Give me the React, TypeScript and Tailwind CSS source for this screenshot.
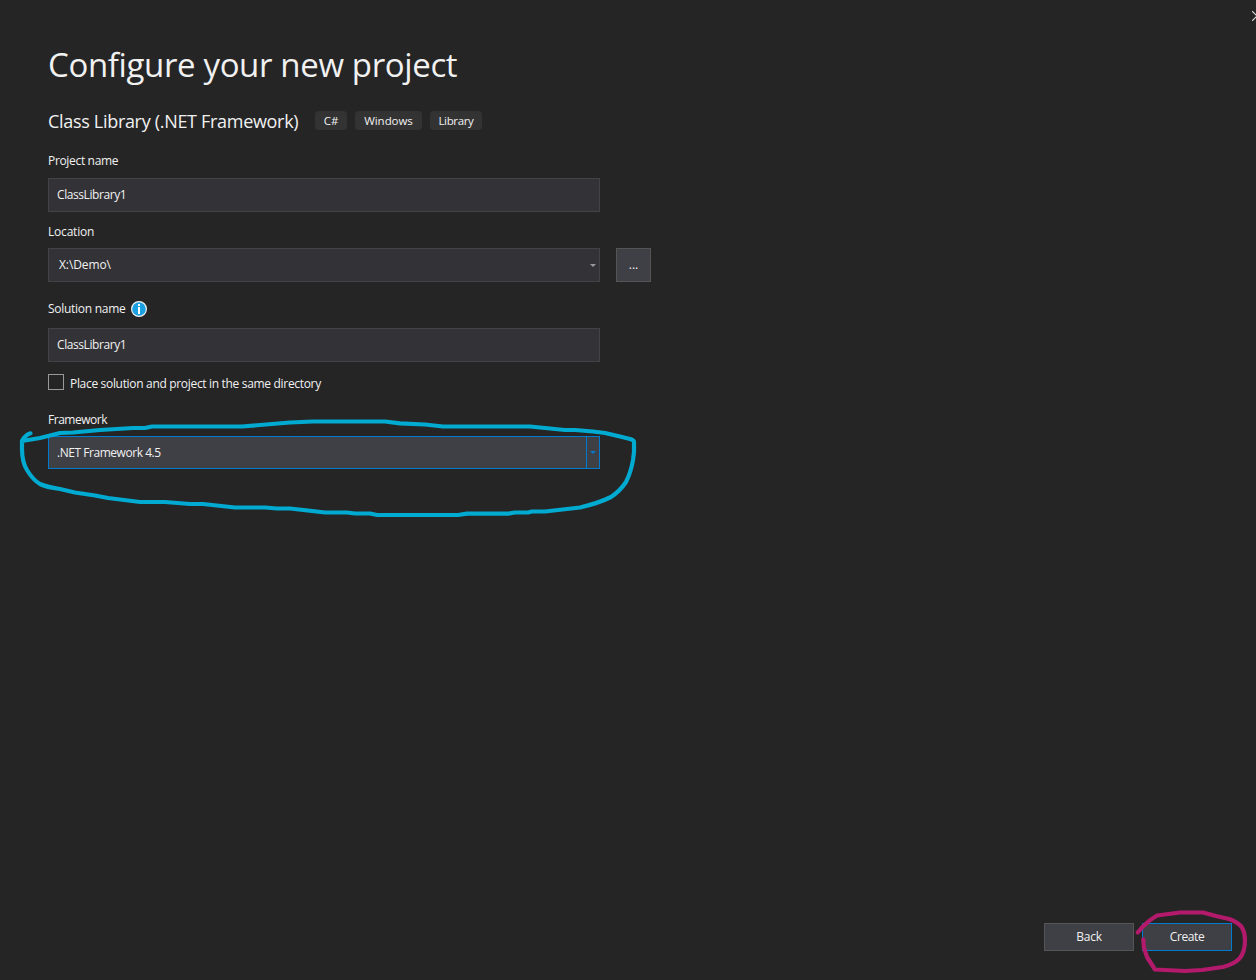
import type { ReactNode } from 'react';

function Badge({ width, children }: { width: string; children: ReactNode }) {
  return (
    <span className={`flex h-[19px] items-center justify-center rounded bg-[#333334] text-[11.5px] ${width}`}>
      {children}
    </span>
  );
}

function TextBox({ children }: { children: ReactNode }) {
  return (
    <div className="flex h-[34px] w-[552px] items-center border border-[#434346] bg-[#333337] px-2 tracking-[-0.42px]">
      {children}
    </div>
  );
}

function Arrow({ className }: { className: string }) {
  return (
    <svg className={className} width="6" height="3" viewBox="0 0 6 3">
      <path d="M0 0h6L3 3z" fill="currentColor" />
    </svg>
  );
}

function InfoIcon() {
  return (
    <svg width="16" height="16" viewBox="0 0 16 16">
      <circle cx="8" cy="8" r="7.4" fill="#1ba1e2" stroke="#f1f1f1" strokeWidth="1.2" />
      <path d="M7 3h2v2H7zM7 6h2v7H7z" fill="#fff" />
    </svg>
  );
}

function Annotations() {
  return (
    <svg className="pointer-events-none absolute inset-0" width="1256" height="980" viewBox="0 0 1256 980" fill="none" strokeLinecap="round" strokeLinejoin="round">
      <path
        stroke="#00aad0"
        strokeWidth="4.2"
        d="M30.5 433.3Q25 435 22 441V449Q22 462 27 470Q33 480 40 484Q46 487 60 489L75 492.5L95 495.5L108 498L140 502H165L190 504H203L235 507.5H265L277 508.5H290L325 512.5H347L355 513.5H370L377 515H458L467 513.7H508L515 512.5H528L532 511.5H545L580 507.5Q599 503 611 497Q620 491 626 482Q631 472 633 460L634 452V442Q634 440 630 439L620 436.5L605 433L593 431.5L575 430H565L530 426.5H443L425 424.5L400 423.3L385 421.5H313L290 422.5L242 426.5H152L145 428H133L100 430L73 432.5L60 433L40 438L22 441"
      />
      <path
        stroke="#b31a6b"
        strokeWidth="4.2"
        d="M1137.7 932.5L1142 927.5Q1149 920 1157 915.5L1180 912.5H1203L1216 916L1230 919.3Q1239 923 1242 927.5Q1245 933 1245 940Q1245 953 1239 959Q1234 964 1223 967L1202 970L1185 971L1155 969.5L1147 957L1144 948L1143.3 939.3"
      />
    </svg>
  );
}

export default function App() {
  return (
    <main className="relative flex h-[980px] w-[1256px] flex-col overflow-hidden bg-[#252526] pl-12 font-['Open_Sans','Noto_Sans',sans-serif] text-[12px] text-[#f1f1f1]">
      <svg className="absolute top-[11px] left-[1252px]" width="10" height="10" viewBox="0 0 10 10" fill="none" stroke="#e0e0e0" strokeWidth="1.1">
        <path d="M0 0l5 5L0 10M10 0L5 5l5 5" />
      </svg>

      <h1 className="mt-[41px] h-12 text-[33px] leading-[48px] tracking-[-0.36px] whitespace-nowrap">Configure your new project</h1>

      <div className="mt-[17px] flex h-[29px] items-center gap-2">
        <h2 className="mr-2 w-[251px] pt-[2px] text-[18px] leading-[29px] tracking-[-0.31px] whitespace-nowrap">Class Library (.NET Framework)</h2>
        <Badge width="w-8 tracking-[-0.1px]">C#</Badge>
        <Badge width="w-[67px] tracking-[-0.05px]">Windows</Badge>
        <Badge width="w-[52px] tracking-[-0.35px]">Library</Badge>
      </div>

      <label className="mt-4 h-5 leading-5 tracking-[-0.33px]">Project name</label>
      <div className="mt-[7px]">
        <TextBox>ClassLibrary1</TextBox>
      </div>

      <label className="mt-[10px] h-5 leading-5 tracking-[-0.2px]">Location</label>
      <div className="mt-[6px] flex gap-4">
        <div className="flex h-[34px] w-[552px] items-center justify-between border border-[#434346] bg-[#333337] pr-[3px] pl-[10px]">
          <span className="tracking-[-0.1px]">X:\Demo\</span>
          <Arrow className="text-[#999999]" />
        </div>
        <button className="h-[34px] w-[35px] border border-[#555555] bg-[#3f3f46]">...</button>
      </div>

      <div className="mt-[17px] flex h-5 items-center gap-[5px]">
        <label className="w-[78px] tracking-[-0.28px] whitespace-nowrap">Solution name</label>
        <InfoIcon />
      </div>
      <div className="mt-[9px]">
        <TextBox>ClassLibrary1</TextBox>
      </div>

      <div className="mt-3 flex h-4 gap-[6px]">
        <span className="size-4 border border-[#999999] bg-[#252526]" />
        <span className="pt-[2px] leading-4 tracking-[-0.32px]">Place solution and project in the same directory</span>
      </div>

      <label className="mt-5 h-5 leading-5 tracking-[-0.48px]">Framework</label>
      <div className="mt-[6px] flex h-[33px] w-[552px] border border-[#007acc] bg-[#3f3f46]">
        <span className="flex flex-1 items-center pl-2 tracking-[-0.46px]">.NET Framework 4.5</span>
        <span className="flex w-[13px] items-center justify-center border-l border-[#007acc]">
          <Arrow className="text-[#007acc]" />
        </span>
      </div>

      <div className="mt-auto mr-6 mb-[29px] flex justify-end gap-2">
        <button className="h-7 w-[90px] border border-[#555555] bg-[#3f3f46] tracking-[-0.2px]">Back</button>
        <button className="h-7 w-[90px] border border-[#007acc] bg-[#3f3f46] tracking-[-0.4px]">Create</button>
      </div>

      <Annotations />
    </main>
  );
}
